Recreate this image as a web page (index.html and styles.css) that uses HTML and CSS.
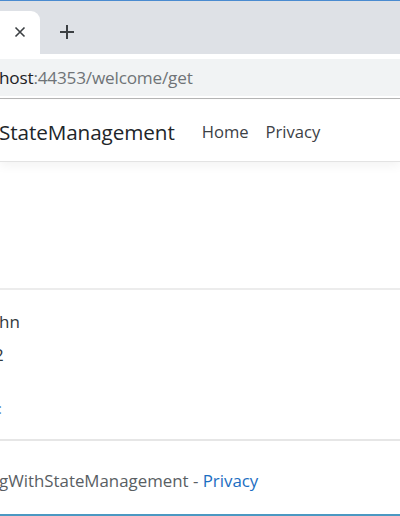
FILE: index.html
```html
<!DOCTYPE html>
<html>
<head>
<meta charset="utf-8">
<link rel="stylesheet" href="styles.css">
</head>
<body>
<div class="window">
  <div class="topline"></div>
  <div class="tabstrip">
    <div class="tab"><span class="tab-close">
      <svg width="12" height="12" viewBox="0 0 12 12"><path d="M1.5 1.5 L10.5 10.5 M10.5 1.5 L1.5 10.5" stroke="#3c4043" stroke-width="1.6" fill="none"/></svg>
    </span></div>
    <div class="newtab">
      <svg width="16" height="16" viewBox="0 0 16 16"><path d="M8 1 V15 M1 8 H15" stroke="#3c4043" stroke-width="2" fill="none"/></svg>
    </div>
  </div>
  <div class="toolbar">
    <div class="omnibox"><span class="host">host</span><span class="rest">:44353/welcome/get</span></div>
  </div>
  <div class="page">
    <header class="navbar">
      <span class="brand">StateManagement</span>
      <nav class="navlinks"><a class="navlink">Home</a><a class="navlink">Privacy</a></nav>
    </header>
    <main class="main">
      <div class="spacer"></div>
      <hr class="rule">
      <div class="line l1"><span class="clip">hn</span></div>
      <div class="line l2"><span class="clip cut">2</span></div>
      <div class="line l3"><span class="clip cut2 link">:</span></div>
    </main>
    <footer class="footer">
      <span>gWithStateManagement - </span><a class="flink">Privacy</a>
    </footer>
  </div>
  <div class="bottomline"></div>
</div>
</body>
</html>
```
FILE: styles.css
```css
html, body {
  margin: 0;
  padding: 0;
  background: #ffffff;
}
body {
  width: 400px;
  height: 516px;
  overflow: hidden;
  font-family: "Open Sans", "Noto Sans", sans-serif;
}
.window {
  display: flex;
  flex-direction: column;
  height: 516px;
}
.topline {
  height: 1px;
  background: #4a8bd0;
}
.tabstrip {
  height: 53px;
  background: #dee1e6;
  display: flex;
  align-items: flex-end;
}
.tab {
  width: 40px;
  height: 43px;
  background: #ffffff;
  border-top-right-radius: 9px;
  display: flex;
  align-items: center;
  justify-content: flex-end;
  box-sizing: border-box;
  padding-right: 14px;
  padding-bottom: 2px;
}
.tab-close svg { display: block; }
.newtab {
  margin-left: 19px;
  height: 43px;
  display: flex;
  align-items: center;
  padding-bottom: 2px;
  box-sizing: border-box;
}
.newtab svg { display: block; }
.toolbar {
  height: 45px;
  background: #ffffff;
  padding-top: 5px;
  box-sizing: border-box;
  border-bottom: 1px solid #b5b5b5;
}
.omnibox {
  height: 37px;
  background: #f1f3f4;
  display: flex;
  align-items: center;
  font-size: 17.2px;
  letter-spacing: -0.2px;
  padding-bottom: 1px;
  box-sizing: border-box;
}
.host { color: #202124; margin-left: -1px; }
.rest { color: #6f7377; }
.page {
  flex: 1;
  display: flex;
  flex-direction: column;
  background: #ffffff;
  margin-top: 1px;
}
.navbar {
  height: 62px;
  display: flex;
  align-items: center;
  border-bottom: 1px solid #e3e3e3;
  box-shadow: 0 4px 10px rgba(0,0,0,0.05);
  box-sizing: border-box;
  padding-top: 2px;
}
.brand {
  font-size: 20.7px;
  color: #212529;
  margin-left: -1px;
  letter-spacing: -0.1px;
}
.navlinks {
  display: flex;
  gap: 17px;
  margin-left: 27px;
}
.navlink {
  font-size: 16.6px;
  color: #3c4146;
}
.main {
  display: flex;
  flex-direction: column;
}
.spacer { height: 126px; }
.rule {
  margin: 0;
  border: 0;
  border-top: 2px solid #ececec;
  height: 0;
}
.line {
  font-size: 17px;
  color: #333a40;
  height: 33px;
  display: flex;
  align-items: center;
  overflow: hidden;
}
.l1 { margin-top: 15px; }
.l3 { margin-top: 20px; }
.clip { margin-left: -1px; }
.cut { margin-left: -6px; }
.cut2 { margin-left: -2px; }
.link { color: #5a86b8; font-size: 15px; }
.footer {
  margin-top: 15px;
  border-top: 2px solid #e6e6e6;
  height: 74px;
  box-sizing: border-box;
  display: flex;
  align-items: center;
  font-size: 16.85px;
  color: #595e63;
  padding-top: 6px;
  white-space: pre;
}
.footer span { margin-left: -1px; }
.flink { color: #1b6ec2; }
.bottomline {
  height: 2px;
  background: #4b98c2;
  margin-top: auto;
}
```
